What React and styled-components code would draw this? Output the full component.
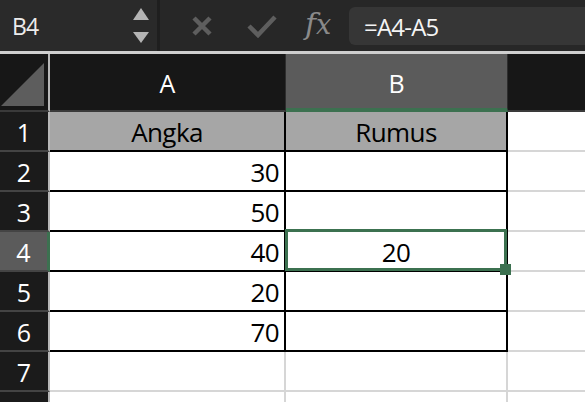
import React from "react";
import styled, { createGlobalStyle } from "styled-components";

const GlobalStyle = createGlobalStyle`
  html, body {
    margin: 0;
    padding: 0;
    background: #ffffff;
    overflow: hidden;
  }
  body {
    font-family: "Open Sans", "Noto Sans", sans-serif;
  }
`;

const GREEN = "#3c7150";

const rows = [
  { n: 1, a: "Angka", b: "Rumus", title: true },
  { n: 2, a: "30", b: "" },
  { n: 3, a: "50", b: "" },
  { n: 4, a: "40", b: "20", active: true },
  { n: 5, a: "20", b: "" },
  { n: 6, a: "70", b: "" },
  { n: 7, plain: true },
  // row 8 is only a sliver at the bottom edge, its number falls outside the view
  { n: "", plain: true },
];

const UpDown = () => (
  <svg width="16" height="36" viewBox="0 0 16 36">
    <polygon points="8,0 16,12 0,12" fill="#b4b4b4" />
    <polygon points="0,24 16,24 8,35" fill="#b4b4b4" />
  </svg>
);

const CrossIcon = () => (
  <svg width="22" height="22" viewBox="0 0 22 22">
    <path d="M3 3 L19 19 M19 3 L3 19" stroke="#5e5e5e" strokeWidth="4.5" />
  </svg>
);

const CheckIcon = () => (
  <svg width="30" height="24" viewBox="0 0 30 24">
    <path
      d="M2 12 L11 21 L28 3"
      stroke="#5e5e5e"
      strokeWidth="4.5"
      fill="none"
    />
  </svg>
);

const App = () => {
  return (
    <Page>
      <GlobalStyle />
      <Toolbar>
        <NameBox>
          <NameText>B4</NameText>
          <UpDown />
        </NameBox>
        <Actions>
          <CrossIcon />
          <CheckIcon />
          <Fx>
            f<i>x</i>
          </Fx>
        </Actions>
        <FormulaBox>=A4-A5</FormulaBox>
      </Toolbar>

      <Sheet>
        <Corner>
          <svg width="44" height="44" viewBox="0 0 44 44">
            <polygon points="43,0 43,43 0,43" fill="#5d5d5d" />
          </svg>
        </Corner>
        <ColHeader>A</ColHeader>
        <ColHeader active>B</ColHeader>
        <ColHeader last />

        {rows.map((r, i) => (
          <React.Fragment key={i}>
            <RowHeader active={r.active}>{r.n}</RowHeader>
            {r.plain ? (
              <>
                <PlainCell />
                <PlainCell />
              </>
            ) : (
              <>
                <Cell title={r.title} align={r.title ? "center" : "right"}>
                  {r.a}
                </Cell>
                <Cell title={r.title} align="center">
                  {r.b}
                  {r.active && (
                    <Selection>
                      <FillHandle />
                    </Selection>
                  )}
                </Cell>
              </>
            )}
            <PlainCell last />
          </React.Fragment>
        ))}
      </Sheet>
    </Page>
  );
};

export default App;

const Page = styled.div`
  width: 585px;
  height: 402px;
  overflow: hidden;
  background: #ffffff;
`;

const Toolbar = styled.div`
  display: flex;
  align-items: stretch;
  background: #272727;
  border-bottom: 3px solid #cfcfcf;
  box-sizing: border-box;
  height: 54px;
`;

const NameBox = styled.div`
  width: 160px;
  display: flex;
  align-items: center;
  justify-content: space-between;
  padding: 0 8px 0 12px;
  box-sizing: border-box;
  background: #2a2a2a;
  border-right: 3px solid #1f1f1f;
`;

const NameText = styled.span`
  color: #ececec;
  font-size: 23px;
  letter-spacing: -0.8px;
`;

const Actions = styled.div`
  display: flex;
  align-items: center;
  gap: 34px;
  padding-left: 31px;
  width: 189px;
  box-sizing: border-box;
`;

const Fx = styled.span`
  font-family: "DejaVu Serif", "Liberation Serif", serif;
  font-style: italic;
  color: #8a8a8a;
  font-size: 30px;
  margin-left: -6px;
  margin-top: -4px;

  i {
    font-style: italic;
    font-size: 27px;
  }
`;

const FormulaBox = styled.div`
  flex: 1;
  margin: 7px 0 6px 0;
  background: #363636;
  border-radius: 6px 0 0 6px;
  color: #f4f4f4;
  font-size: 24px;
  display: flex;
  align-items: center;
  padding-left: 15px;
  letter-spacing: -0.8px;
`;

const Sheet = styled.div`
  display: grid;
  grid-template-columns: 50px 236px 222px 1fr;
  grid-template-rows: 58px;
  grid-auto-rows: 40px;
`;

const Corner = styled.div`
  background: #171717;
  border-right: 2px solid #b8b8b8;
  border-bottom: 2px solid #3a3a3a;
  box-sizing: border-box;
  display: flex;
  align-items: flex-end;
  padding: 0 0 3px 1px;
`;

const ColHeader = styled.div`
  background: ${(props) => (props.active ? "#5b5b5b" : "#171717")};
  color: #ffffff;
  font-size: 25px;
  display: flex;
  align-items: center;
  justify-content: center;
  box-sizing: border-box;
  border-right: ${(props) => (props.last ? "none" : "1px solid #2e2e2e")};
  border-bottom: ${(props) =>
    props.active ? `4px solid ${GREEN}` : "2px solid #3a3a3a"};
  padding-top: ${(props) => (props.active ? "3px" : "1px")};
`;

const RowHeader = styled.div`
  background: ${(props) => (props.active ? "#5b5b5b" : "#1b1b1b")};
  color: #ffffff;
  font-size: 25px;
  display: flex;
  align-items: center;
  justify-content: center;
  box-sizing: border-box;
  border-bottom: 2px solid #444444;
  border-right: ${(props) =>
    props.active ? `3px solid ${GREEN}` : "2px solid #b8b8b8"};
  padding-top: 2px;
`;

const Cell = styled.div`
  position: relative;
  background: ${(props) => (props.title ? "#a6a6a6" : "#ffffff")};
  color: #000000;
  font-size: 26px;
  display: flex;
  align-items: center;
  justify-content: ${(props) =>
    props.align === "right" ? "flex-end" : "center"};
  padding: 2px 5px 0 5px;
  box-sizing: border-box;
  border-right: 2px solid #000000;
  border-bottom: 2px solid #000000;
  letter-spacing: -0.6px;
`;

const PlainCell = styled.div`
  background: #ffffff;
  box-sizing: border-box;
  border-right: ${(props) => (props.last ? "none" : "2px solid #d6d6d6")};
  border-bottom: 2px solid #d6d6d6;
`;

const Selection = styled.div`
  position: absolute;
  z-index: 2;
  top: -3px;
  left: -1px;
  right: -1px;
  bottom: -1px;
  border: 3px solid ${GREEN};
  pointer-events: none;
`;

const FillHandle = styled.div`
  position: absolute;
  right: -7px;
  bottom: -7px;
  width: 11px;
  height: 11px;
  background: ${GREEN};
`;
